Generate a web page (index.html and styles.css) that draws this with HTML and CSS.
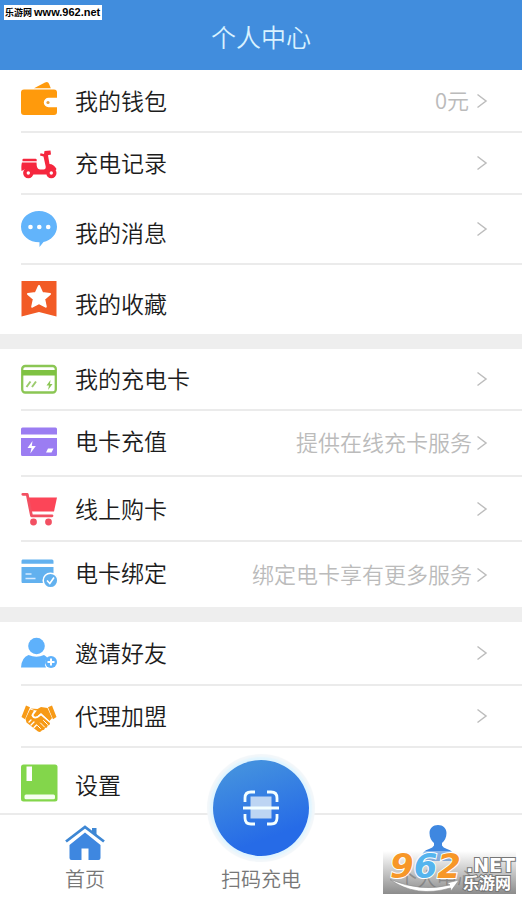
FILE: index.html
```html
<!DOCTYPE html>
<html lang="zh-CN">
<head>
<meta charset="utf-8">
<meta name="viewport" content="width=device-width, initial-scale=1">
<title>个人中心</title>
<link rel="stylesheet" href="styles.css">
</head>
<body>
<header class="topbar">
  <h1 class="title">个人中心</h1>
  <span class="site-tag">乐游网 <b class="site-url">www.962.net</b></span>
</header>

<main class="content">
  <nav class="group group-account" aria-label="账户">
    <a class="row" href="#wallet">
      <svg class="icon" viewBox="0 0 36 36" aria-hidden="true"><path fill="#ff9a0c" d="M13 5.200 24 -.4q3-1.400 4 1.200l1.800 4.400zM3 6.500h30q3 0 3 3v5.300H27.500a4.700 4.700 0 0 0 0 9.400H36V29q0 3-3 3H3q-3 0-3-3V9.500q0-3 3-3"/><circle cx="27" cy="19.500" r="1.600" fill="#e5a040"/></svg>
      <span class="label">我的钱包</span><span class="hint hint-value">0元</span>
      <svg class="chevron" viewBox="0 0 12 16" aria-hidden="true"><path d="m1.500 1.500 8.500 6.500-8.500 6.500"/></svg>
    </a>
    <a class="row" href="#records">
      <svg class="icon" viewBox="0 0 36 36" aria-hidden="true"><g fill="#f5273e"><path d="M1.500 14.500q0-.8 1-.8h12q1.200 0 1.200 1v1.500H1.500zM1 17.500h14.500q0 7 3.500 7h3.500q2.500 0 2.200-3L22.500 11.500l-3.500-1 .5-2.200 3.500.8.5-3 6-.6.5 4-3 .8L28.500 19q4 0 7 5l-1 1.500q-7-2.500-9 4H12q-1.500-6.500-8.500-5L.5 26Q0 20 1 17.500"/><circle cx="7.300" cy="28" r="5.200"/><circle cx="30.300" cy="28" r="5.200"/></g><circle cx="7.300" cy="28" r="1.700" fill="#fff"/><circle cx="30.300" cy="28" r="1.700" fill="#fff"/></svg>
      <span class="label">充电记录</span>
      <svg class="chevron" viewBox="0 0 12 16" aria-hidden="true"><path d="m1.500 1.500 8.500 6.500-8.500 6.500"/></svg>
    </a>
    <a class="row row-low" href="#messages">
      <svg class="icon" viewBox="0 0 36 36" aria-hidden="true"><path fill="#62b4fb" d="M18 0c10 0 18 7 18 15.700 0 7.500-6 13.700-13.500 15.300L18.500 36v-4.700C8 31.300 0 24.500 0 15.700S8 0 18 0"/><g fill="#fff"><circle cx="9.500" cy="16" r="2.300"/><circle cx="18.300" cy="16" r="2.300"/><circle cx="27.200" cy="16" r="2.300"/></g></svg>
      <span class="label">我的消息</span>
      <svg class="chevron" viewBox="0 0 12 16" aria-hidden="true"><path d="m1.500 1.500 8.500 6.500-8.500 6.500"/></svg>
    </a>
    <a class="row row-low" href="#favourites">
      <svg class="icon" viewBox="0 0 36 36" aria-hidden="true"><path fill="#f25b26" d="M.500-1h35v35.500L18 30 .500 34.500z"/><path fill="#fff" stroke="#fff" stroke-width="2" stroke-linejoin="round" d="m18 4 3.200 7 7.800.900-5.800 5.200 1.600 7.600L18 21l-6.800 3.700 1.600-7.600L7 11.900l7.800-.900z"/></svg>
      <span class="label">我的收藏</span>
    </a>
  </nav>

  <nav class="group group-card" aria-label="充电卡">
    <a class="row" href="#cards">
      <svg class="icon" viewBox="0 0 36 36" aria-hidden="true"><rect x="1.200" y="5" width="33.600" height="26.500" rx="3" fill="#fff" stroke="#8bc654" stroke-width="2.300"/><path fill="#7fc242" d="M1 9h34v5.500H1z"/><path fill="none" stroke="#9ccb6e" stroke-width="2" d="m5.500 26 4-5.500m1.500 5.500 4-5.500"/><path fill="#8bc654" d="m29.500 19-4 5.500h2.500l-1 4.500 4.500-6H29z"/></svg>
      <span class="label">我的充电卡</span>
      <svg class="chevron" viewBox="0 0 12 16" aria-hidden="true"><path d="m1.500 1.500 8.500 6.500-8.500 6.500"/></svg>
    </a>
    <a class="row row-high" href="#recharge">
      <svg class="icon" viewBox="0 0 36 36" aria-hidden="true"><path fill="#9b7df2" d="M1.500 2.500h33q1.500 0 1.500 1.500v5.500H0V4q0-1.500 1.500-1.500M0 13h36v16.500q0 1.500-1.500 1.500h-33Q0 31 0 29.500z"/><path fill="#fff" d="m11.500 16-5 7h4l-1.200 5.500 5.500-7.500h-4zM27 23.500h5.500l-2 4H25z"/></svg>
      <span class="label">电卡充值</span><span class="hint">提供在线充卡服务</span>
      <svg class="chevron" viewBox="0 0 12 16" aria-hidden="true"><path d="m1.500 1.500 8.500 6.500-8.500 6.500"/></svg>
    </a>
    <a class="row" href="#shop">
      <svg class="icon" viewBox="0 0 36 36" aria-hidden="true"><path fill="#fc4558" d="M6.500 6.500h29.500l-3 14H10z"/><path fill="none" stroke="#f25062" stroke-width="2.800" stroke-linejoin="round" stroke-linecap="round" d="M1.800 3.300h4.400L10.500 24.800h20.500"/><g fill="#f25062"><circle cx="12.500" cy="31" r="3.400"/><circle cx="27.500" cy="31" r="3.400"/></g></svg>
      <span class="label">线上购卡</span>
      <svg class="chevron" viewBox="0 0 12 16" aria-hidden="true"><path d="m1.500 1.500 8.500 6.500-8.500 6.500"/></svg>
    </a>
    <a class="row row-high" href="#bind">
      <svg class="icon" viewBox="0 0 36 36" aria-hidden="true"><path fill="#62b1ef" d="M1.500 2.500H31q1.500 0 1.500 1.500v2.800H.500V4q0-1.500 1-1.500M.500 10h32v16h-31q-1 0-1-1.500z"/><path stroke="#d5eaff" stroke-width="1.300" d="M4.500 17h6m-6 4.500h10"/><circle cx="29.500" cy="23.500" r="7.300" fill="#62b1ef" stroke="#fff" stroke-width="1.500"/><path fill="none" stroke="#fff" stroke-width="1.600" d="m26 23.500 2.800 3L33 20.500"/></svg>
      <span class="label">电卡绑定</span><span class="hint">绑定电卡享有更多服务</span>
      <svg class="chevron" viewBox="0 0 12 16" aria-hidden="true"><path d="m1.500 1.500 8.500 6.500-8.500 6.500"/></svg>
    </a>
  </nav>

  <nav class="group group-more" aria-label="更多">
    <a class="row" href="#invite">
      <svg class="icon" viewBox="0 0 36 36" aria-hidden="true"><g fill="#5eb1fb"><circle cx="15.500" cy="11" r="8.300"/><path d="M0 32.500q.500-10 7.500-12.500 8 3.500 15.500 0 2.500 1.500 3.500 3-4.500 4-1.500 9.500z"/><circle cx="30" cy="27" r="6"/></g><path fill="none" stroke="#fff" stroke-width="2" d="M26.500 27h7M30 23.500v7"/></svg>
      <span class="label">邀请好友</span>
      <svg class="chevron" viewBox="0 0 12 16" aria-hidden="true"><path d="m1.500 1.500 8.500 6.500-8.500 6.500"/></svg>
    </a>
    <a class="row" href="#agent">
      <svg class="icon" viewBox="0 0 36 36" aria-hidden="true"><g fill="#f79a16"><path d="m5 7.500 4 1.800-5 12L.500 19zM31 7.500l-4 1.800 5 12 3.500-2.300z"/><path d="m9.500 10.500 7 .500L20 9l6.500 1L31 20l-2.500 3-8.500-8-4 3.500q-3 1-3.500-1.500l3-4-2.500-1z"/><path d="m9 11.500 4 1-2.500 4.500q1 4.500 6 3l3.500-2.500 9 7.500q0 2.500-2.500 2.500.2 2.500-2.500 2.500-.500 2.500-3 2.300-1.500 2.500-4 1.200L5.500 24.500 4.500 21z"/></g><g fill="none" stroke="#fff" stroke-width="1" stroke-linecap="round"><path d="M15 12.500 11 17q1 4 5.500 1.500L20 16l9 8M22.500 22.500l4 4M19.500 25l4 4M16.500 27.500l3 3"/><path d="m8 24 2-2m0 5 3-3m0 5.500 2.500-2.500" stroke-width="1.300"/></g></svg>
      <span class="label">代理加盟</span>
      <svg class="chevron" viewBox="0 0 12 16" aria-hidden="true"><path d="m1.500 1.500 8.500 6.500-8.500 6.500"/></svg>
    </a>
    <a class="row row-low" href="#settings">
      <svg class="icon" viewBox="0 0 36 36" aria-hidden="true"><rect y="1.500" width="36.500" height="37" rx="2.500" fill="#83d64b"/><path fill="#fff" d="M5.500 3.500H11V18H5.500z"/><rect x="3.500" y="31.500" width="30.500" height="4.800" rx="1.500" fill="#f6fff0"/></svg>
      <span class="label">设置</span>
    </a>
  </nav>
</main>

<footer class="tabbar">
  <a class="tab" href="#home">
    <svg class="tab-icon" viewBox="0 0 40 36" aria-hidden="true"><path fill="#3e87e0" d="M4.500 20 20 7.500 35.500 20v13q0 2-2 2H23.500V23.500h-7V35H6.500q-2 0-2-2z"/><path fill="none" stroke="#fff" stroke-width="1.200" d="M2.500 18.500 20 5l17.500 13.500"/><path fill="none" stroke="#3e87d4" stroke-width="2.800" d="M1 16.500 20 2l19 14.500"/><path fill="#3e87d4" d="M27 3h4.500v8L27 7.500z"/></svg>
    <span>首页</span>
  </a>
  <button class="tab tab-scan" type="button">
    <span class="scan-disc">
      <svg class="scan-icon" viewBox="0 0 36 36" aria-hidden="true"><path fill="#bdd5f3" d="M7.500 6.500h21v22h-21z"/><path fill="none" stroke="#f4ffff" stroke-width="2.800" d="M12 2H8Q2 2 2 8v4M24 2h4q6 0 6 6v4M2 24v4q0 6 6 6h4M34 24v4q0 6-6 6h-4M0 18h36"/></svg>
    </span>
    <span>扫码充电</span>
  </button>
  <a class="tab" href="#me" aria-current="page">
    <svg class="tab-icon" viewBox="0 0 40 36" aria-hidden="true"><path fill="#3e87e0" d="M21 0c5 0 8.500 3.500 8.500 8 0 4.500-2 8-4.500 10v2.500q1 2 5 3.500 7 2 7 8v4H5v-4q0-6 7-8 4-1.500 5-3.500V18c-2.500-2-4.500-5.500-4.500-10 0-4.500 3.500-8 8.500-8"/></svg>
    <span>个人中心</span>
  </a>
  <div class="watermark">
    <span class="wm-number"><i class="wm-orange">9</i><i class="wm-blue">6</i><i class="wm-orange">2</i></span>
    <span class="wm-net">.NET</span>
    <span class="wm-name">乐游网</span>
    <svg class="wm-swoosh" viewBox="0 0 133 43" aria-hidden="true"><path fill="#fff" stroke="#8b8b8b" stroke-width=".6" d="M7 28.500q32 13 60 5.500l-3-2 12-3-8 11-.500-3Q33 47 7 28.500"/></svg>
  </div>
</footer>
</body>
</html>
```

FILE: styles.css
```css
* {
  box-sizing: border-box;
}

body {
  margin: 0;
  min-height: 100vh;
  display: flex;
  flex-direction: column;
  background: #fff;
  color: #1c1c1c;
  font-family: "Noto Sans CJK SC", "Noto Sans", sans-serif;
  font-weight: 350;
}

a {
  color: inherit;
  text-decoration: none;
}

.topbar {
  position: relative;
  display: flex;
  align-items: center;
  justify-content: center;
  height: 70px;
  padding-top: 2px;
  background: #418ddd;
}

.title {
  margin: 0;
  color: #d9f2ff;
  font-size: 25px;
  font-weight: 350;
  line-height: 32px;
}

.site-tag {
  position: absolute;
  top: 5px;
  left: 4px;
  padding: 0 2px 0 1px;
  background: #fff;
  color: #000;
  font-size: 9px;
  font-weight: 700;
  line-height: 14px;
  white-space: nowrap;
}

.site-url {
  font-family: "Liberation Sans", sans-serif;
  font-size: 11px;
}

.content {
  display: grid;
  gap: 15px;
  background: #eee;
}

.group {
  display: grid;
  background: #fff;
}

.group-account {
  grid-template-rows: 63px 62px 70px 69px;
}

.group-card {
  grid-template-rows: 62px 66px 65px 65px;
}

.group-more {
  grid-template-rows: 64px 62px 65px;
}

.row {
  display: flex;
  align-items: center;
  margin-left: 21px;
  padding-right: 34px;
  border-bottom: 2px solid #ebebeb;
}

.row:last-child {
  border-bottom: 0;
}

.icon {
  flex: none;
  width: 36px;
  height: 36px;
  margin-right: 18px;
  overflow: visible;
}

.label {
  flex: 1;
  padding-bottom: 2px;
  font-size: 23px;
  line-height: 32px;
}

.row-low .label {
  padding-top: 8px;
}

.row-high .label {
  padding-bottom: 6px;
}

.hint {
  margin-right: 4px;
  padding-bottom: 4px;
  color: #bbb;
  font-size: 22px;
  line-height: 32px;
}

.hint-value {
  margin-right: 7px;
}

.chevron {
  flex: none;
  width: 12px;
  height: 16px;
  fill: none;
  stroke: #bdbdbd;
  stroke-width: 1.5;
}

.tabbar {
  position: relative;
  flex: 1;
  display: grid;
  grid-template-columns: repeat(3, 1fr);
  column-gap: 6px;
  align-items: end;
  min-height: 86px;
  padding-bottom: 7px;
  border-top: 2px solid #ebebeb;
}

.tab {
  display: flex;
  flex-direction: column;
  align-items: center;
  gap: 4px;
  padding: 0;
  border: 0;
  background: none;
  color: #777;
  font-family: inherit;
  font-size: 20px;
  font-weight: 350;
  line-height: 28px;
}

.tab-icon {
  width: 40px;
  height: 36px;
}

.tab-scan {
  margin-top: -66px;
}

.scan-disc {
  display: grid;
  place-items: center;
  width: 96px;
  height: 96px;
  margin-bottom: 5px;
  border-radius: 50%;
  background: linear-gradient(160deg, #428fdf 15%, #266be7 75%);
  box-shadow: 0 0 2px 3px #e0f5ff, 0 0 1px 6px #f3f7fa;
}

.scan-icon {
  width: 36px;
  height: 36px;
}

.watermark {
  position: absolute;
  right: 6px;
  bottom: 6px;
  width: 133px;
  height: 43px;
  background: linear-gradient(rgba(255, 255, 255, 0.4), rgba(120, 120, 120, 0.85));
  color: #fff;
  font-family: "Liberation Sans", "Noto Sans CJK SC", sans-serif;
  font-weight: 700;
  white-space: nowrap;
}

.wm-number,
.wm-net,
.wm-name,
.wm-swoosh {
  position: absolute;
}

.wm-number {
  top: -1px;
  left: 7px;
  font-family: "DejaVu Sans", sans-serif;
  font-size: 34px;
  line-height: 32px;
  -webkit-text-stroke: 2px #fff;
  paint-order: stroke fill;
}

.wm-orange {
  color: #f79728;
}

.wm-blue {
  color: #55b4ee;
}

.wm-net {
  top: 4px;
  right: 1px;
  font-family: "DejaVu Sans", sans-serif;
  font-size: 19px;
  line-height: 20px;
  -webkit-text-stroke: 2px #777;
  paint-order: stroke fill;
}

.wm-name {
  right: 5px;
  bottom: 0;
  font-size: 16px;
  line-height: 20px;
  -webkit-text-stroke: 2px #777;
  paint-order: stroke fill;
}

.wm-swoosh {
  inset: 0;
}
```
